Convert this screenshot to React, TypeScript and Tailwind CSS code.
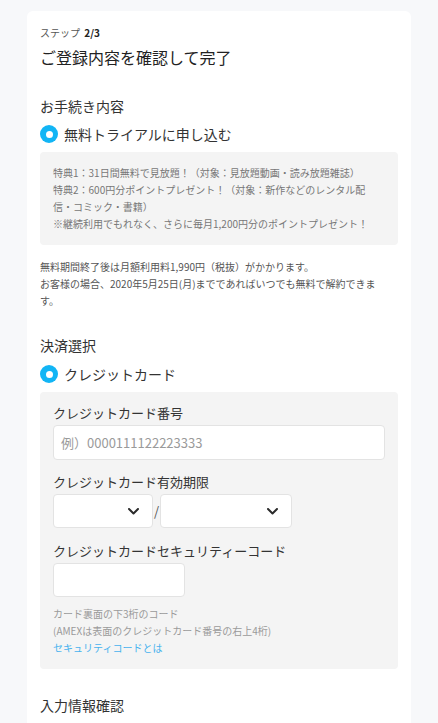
import React from 'react'

function Radio({ label }: { label: string }) {
    return (
        <div className="flex items-center h-[20px] gap-[6px]">
            <div className="w-[18px] h-[18px] rounded-full bg-[#12b5f5] flex items-center justify-center">
                <div className="w-[7px] h-[7px] rounded-full bg-white" />
            </div>
            <span className="text-[14px] leading-[20px] text-[#333]">{label}</span>
        </div>
    )
}

function Chevron() {
    return (
        <svg width="11" height="7" viewBox="0 0 11 7" fill="none">
            <path d="M1 1l4.5 4.5L10 1" stroke="#2b2b2b" strokeWidth="2" strokeLinecap="round" strokeLinejoin="round" />
        </svg>
    )
}

function SelectBox({ width }: { width: string }) {
    return (
        <div className={`${width} h-[34px] bg-white border border-[#e3e3e3] rounded-[4px] flex items-center justify-end pr-[13px]`}>
            <Chevron />
        </div>
    )
}

export default function App() {
    return (
        <div className="min-h-screen bg-[#f7f8fa] pt-[11px] font-['Noto_Sans_CJK_JP','Noto_Sans',sans-serif]">
            <div className="w-[384px] mx-auto bg-white rounded-[6px] px-[13px] pt-[13px] pb-[40px]">
                <div className="text-[10px] leading-[17px] text-[#555]">
                    ステップ <span className="font-bold text-[#222] ml-[2px]">2/3</span>
                </div>
                <h1 className="mt-[4px] text-[16px] leading-[24px] text-[#222]">ご登録内容を確認して完了</h1>

                <h2 className="mt-[27px] text-[14px] leading-[20px] text-[#333]">お手続き内容</h2>
                <div className="mt-[8px]">
                    <Radio label="無料トライアルに申し込む" />
                </div>
                <div className="mt-[8px] bg-[#f4f4f4] rounded-[4px] pl-[13px] pr-[26px] pt-[12px] pb-[13px] text-[10px] leading-[17px] text-[#777]">
                    <p>特典1：31日間無料で見放題！（対象：見放題動画・読み放題雑誌）</p>
                    <p>特典2：600円分ポイントプレゼント！（対象：新作などのレンタル配信・コミック・書籍）</p>
                    <p>※継続利用でもれなく、さらに毎月1,200円分のポイントプレゼント！</p>
                </div>
                <div className="mt-[13px] w-[346px] text-[10px] leading-[17px] text-[#555]">
                    <p>無料期間終了後は月額利用料1,990円（税抜）がかかります。</p>
                    <p>お客様の場合、2020年5月25日(月)までであればいつでも無料で解約できます。</p>
                </div>

                <h2 className="mt-[26px] text-[14px] leading-[20px] text-[#333]">決済選択</h2>
                <div className="mt-[9px]">
                    <Radio label="クレジットカード" />
                </div>
                <div className="mt-[8px] bg-[#f4f4f4] rounded-[4px] px-[13px] pt-[11px] pb-[13px]">
                    <label className="block text-[13px] leading-[20px] text-[#333]">クレジットカード番号</label>
                    <div className="mt-[2px] h-[35px] bg-white border border-[#e3e3e3] rounded-[4px] flex items-center pl-[7px] text-[13px] text-[#9a9a9a]">
                        例）0000111122223333
                    </div>

                    <label className="block mt-[12px] text-[13px] leading-[20px] text-[#333]">クレジットカード有効期限</label>
                    <div className="mt-[2px] flex items-center">
                        <SelectBox width="w-[100px]" />
                        <span className="w-[7px] text-center text-[13px] text-[#555]">/</span>
                        <SelectBox width="w-[132px]" />
                    </div>

                    <label className="block mt-[13px] text-[13px] leading-[20px] text-[#333]">クレジットカードセキュリティーコード</label>
                    <div className="mt-[2px] w-[132px] h-[34px] bg-white border border-[#e3e3e3] rounded-[4px]" />

                    <div className="mt-[8px] text-[10px] leading-[17px] text-[#9a9a9a]">
                        <p>カード裏面の下3桁のコード</p>
                        <p>(AMEXは表面のクレジットカード番号の右上4桁)</p>
                        <a className="block text-[#47b2ee]">セキュリティコードとは</a>
                    </div>
                </div>

                <h2 className="mt-[26px] text-[14px] leading-[20px] text-[#333]">入力情報確認</h2>
            </div>
        </div>
    )
}
